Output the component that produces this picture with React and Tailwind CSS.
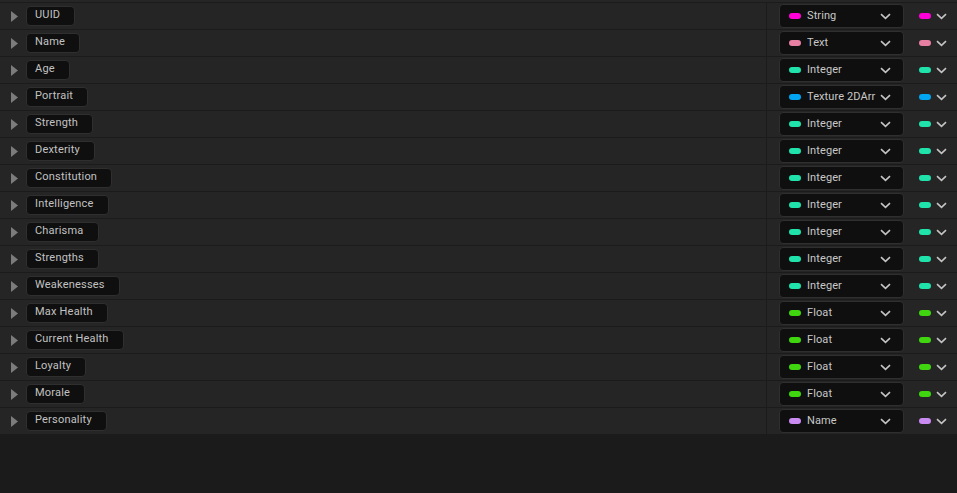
const fields = [
  { name: "UUID", type: "String", color: "bg-[#ff00d8]" },
  { name: "Name", type: "Text", color: "bg-[#e77fa3]" },
  { name: "Age", type: "Integer", color: "bg-[#1fe3ab]" },
  { name: "Portrait", type: "Texture 2DArr", color: "bg-[#00a6f2]" },
  { name: "Strength", type: "Integer", color: "bg-[#1fe3ab]" },
  { name: "Dexterity", type: "Integer", color: "bg-[#1fe3ab]" },
  { name: "Constitution", type: "Integer", color: "bg-[#1fe3ab]" },
  { name: "Intelligence", type: "Integer", color: "bg-[#1fe3ab]" },
  { name: "Charisma", type: "Integer", color: "bg-[#1fe3ab]" },
  { name: "Strengths", type: "Integer", color: "bg-[#1fe3ab]" },
  { name: "Weakenesses", type: "Integer", color: "bg-[#1fe3ab]" },
  { name: "Max Health", type: "Float", color: "bg-[#3fd60f]" },
  { name: "Current Health", type: "Float", color: "bg-[#3fd60f]" },
  { name: "Loyalty", type: "Float", color: "bg-[#3fd60f]" },
  { name: "Morale", type: "Float", color: "bg-[#3fd60f]" },
  { name: "Personality", type: "Name", color: "bg-[#c98af2]" },
];

function Chevron() {
  return (
    <svg width="11" height="7" viewBox="0 0 11 7" className="shrink-0">
      <path d="M1 1.2 L5.5 5.4 L10 1.2" fill="none" stroke="#c4c4c4" strokeWidth="1.6" />
    </svg>
  );
}

function Row({ field }) {
  return (
    <div className="flex h-[27px] border-t border-[#1b1b1b] bg-[#252525]">
      <div className="flex items-center flex-1 pl-[11px]">
        <svg width="7" height="11" viewBox="0 0 7 11" className="shrink-0">
          <path d="M0 0 L7 5.5 L0 11 Z" fill="#7c7c7c" />
        </svg>
        <div className="ml-[8px] h-[20px] flex items-start pt-[2px] pl-[8px] pr-[14px] bg-[#0f0f0f] border border-[#2f2f2f] rounded-[4px] text-[11px] leading-[12px] tracking-[0.2px] text-[#c2c2c2]">
          {field.name}
        </div>
      </div>
      <div className="flex items-center w-[191px] border-l border-[#1b1b1b] pl-[12px]">
        <div className="flex items-center w-[125px] h-[24px] bg-[#0f0f0f] border border-[#2f2f2f] rounded-[4px] pl-[9px] pr-[12px]">
          <span className={`w-[12px] h-[6px] rounded-full shrink-0 ${field.color}`}></span>
          <span className="ml-[6px] flex-1 overflow-hidden whitespace-nowrap text-[11px] tracking-[0.1px] text-[#c8c8c8]">{field.type}</span>
          <Chevron />
        </div>
        <span className={`ml-[15px] w-[12px] h-[6px] rounded-full shrink-0 ${field.color}`}></span>
        <span className="ml-[5px]"><Chevron /></span>
      </div>
    </div>
  );
}

export default function App() {
  return (
    <div className="w-[957px] h-[493px] bg-[#1b1b1b] overflow-hidden" style={{ fontFamily: "Roboto, 'Liberation Sans', sans-serif" }}>
      <div className="h-[2px] bg-[#262626]"></div>
      <div className="flex flex-col">
        {fields.map((f) => (
          <Row key={f.name} field={f} />
        ))}
      </div>
      <div className="border-t border-[#1b1b1b]"></div>
    </div>
  );
}
